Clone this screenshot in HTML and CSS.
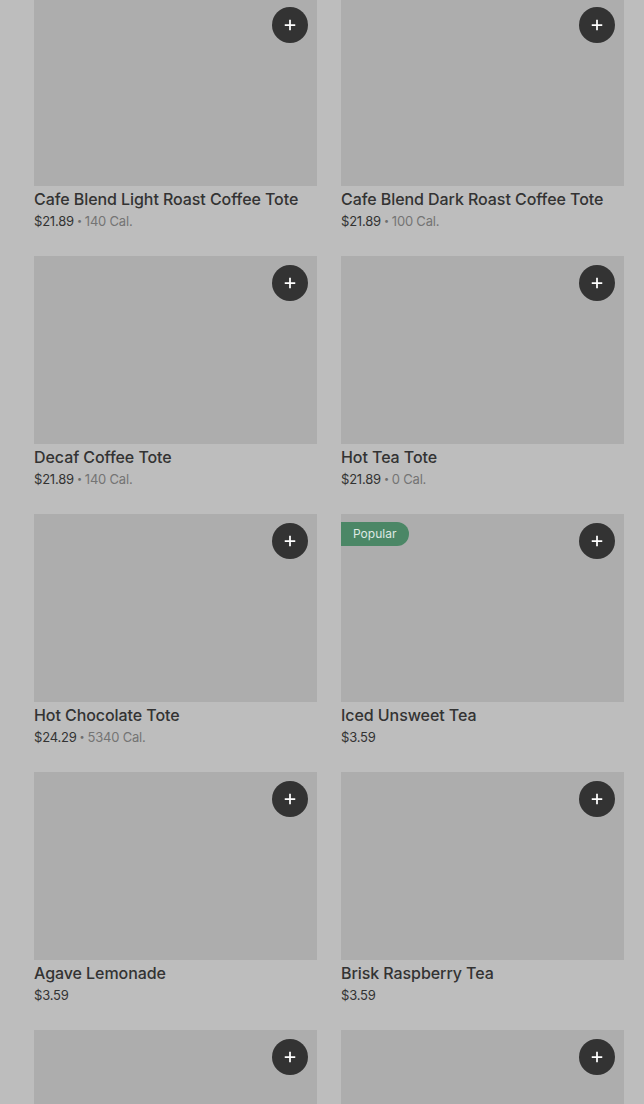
FILE: index.html
```html
<!DOCTYPE html>
<html>
<head>
<meta charset="utf-8">
<link rel="stylesheet" href="styles.css">
</head>
<body>
<div class="grid">
  <div class="item">
    <div class="thumb"><button class="add"><svg viewBox="0 0 16 16" width="16" height="16"><path d="M7 2h2v5h5v2H9v5H7V9H2V7h5z" fill="#fff"/></svg></button></div>
    <div class="name">Cafe Blend Light Roast Coffee Tote</div>
    <div class="meta"><span class="price">$21.89</span><span class="dot">•</span><span class="cal">140 Cal.</span></div>
  </div>
  <div class="item">
    <div class="thumb"><button class="add"><svg viewBox="0 0 16 16" width="16" height="16"><path d="M7 2h2v5h5v2H9v5H7V9H2V7h5z" fill="#fff"/></svg></button></div>
    <div class="name">Cafe Blend Dark Roast Coffee Tote</div>
    <div class="meta"><span class="price">$21.89</span><span class="dot">•</span><span class="cal">100 Cal.</span></div>
  </div>
  <div class="item">
    <div class="thumb"><button class="add"><svg viewBox="0 0 16 16" width="16" height="16"><path d="M7 2h2v5h5v2H9v5H7V9H2V7h5z" fill="#fff"/></svg></button></div>
    <div class="name">Decaf Coffee Tote</div>
    <div class="meta"><span class="price">$21.89</span><span class="dot">•</span><span class="cal">140 Cal.</span></div>
  </div>
  <div class="item">
    <div class="thumb"><button class="add"><svg viewBox="0 0 16 16" width="16" height="16"><path d="M7 2h2v5h5v2H9v5H7V9H2V7h5z" fill="#fff"/></svg></button></div>
    <div class="name">Hot Tea Tote</div>
    <div class="meta"><span class="price">$21.89</span><span class="dot">•</span><span class="cal">0 Cal.</span></div>
  </div>
  <div class="item">
    <div class="thumb"><button class="add"><svg viewBox="0 0 16 16" width="16" height="16"><path d="M7 2h2v5h5v2H9v5H7V9H2V7h5z" fill="#fff"/></svg></button></div>
    <div class="name">Hot Chocolate Tote</div>
    <div class="meta"><span class="price">$24.29</span><span class="dot">•</span><span class="cal">5340 Cal.</span></div>
  </div>
  <div class="item">
    <div class="thumb"><span class="badge">Popular</span><button class="add"><svg viewBox="0 0 16 16" width="16" height="16"><path d="M7 2h2v5h5v2H9v5H7V9H2V7h5z" fill="#fff"/></svg></button></div>
    <div class="name">Iced Unsweet Tea</div>
    <div class="meta"><span class="price">$3.59</span></div>
  </div>
  <div class="item">
    <div class="thumb"><button class="add"><svg viewBox="0 0 16 16" width="16" height="16"><path d="M7 2h2v5h5v2H9v5H7V9H2V7h5z" fill="#fff"/></svg></button></div>
    <div class="name">Agave Lemonade</div>
    <div class="meta"><span class="price">$3.59</span></div>
  </div>
  <div class="item">
    <div class="thumb"><button class="add"><svg viewBox="0 0 16 16" width="16" height="16"><path d="M7 2h2v5h5v2H9v5H7V9H2V7h5z" fill="#fff"/></svg></button></div>
    <div class="name">Brisk Raspberry Tea</div>
    <div class="meta"><span class="price">$3.59</span></div>
  </div>
  <div class="item">
    <div class="thumb"><button class="add"><svg viewBox="0 0 16 16" width="16" height="16"><path d="M7 2h2v5h5v2H9v5H7V9H2V7h5z" fill="#fff"/></svg></button></div>
  </div>
  <div class="item">
    <div class="thumb"><button class="add"><svg viewBox="0 0 16 16" width="16" height="16"><path d="M7 2h2v5h5v2H9v5H7V9H2V7h5z" fill="#fff"/></svg></button></div>
  </div>
</div>
</body>
</html>
```
FILE: styles.css
```css
html, body {
  margin: 0;
  padding: 0;
  background: #bdbdbd;
  height: 1104px;
  overflow: hidden;
}
body {
  font-family: "Inter", "Noto Sans", sans-serif;
  color: #333;
}
.grid {
  display: grid;
  grid-template-columns: 283px 283px;
  column-gap: 24px;
  row-gap: 0;
  padding: 0 20px 0 34px;
  margin-top: -2px;
}
.item {
  height: 258px;
}
.thumb {
  position: relative;
  height: 188px;
  background: #adadad;
}
.add {
  position: absolute;
  top: 9px;
  right: 9px;
  width: 36px;
  height: 36px;
  border-radius: 50%;
  border: none;
  padding: 0;
  background: #333;
  display: flex;
  align-items: center;
  justify-content: center;
}
.add svg {
  width: 14px;
  height: 14px;
}
.badge {
  position: absolute;
  top: 8px;
  left: 0;
  height: 24px;
  line-height: 24px;
  padding: 0 13px 0 12px;
  background: #4b8766;
  color: #dfe9e3;
  font-size: 12px;
  border-radius: 0 12px 12px 0;
}
.name {
  margin-top: 2px;
  font-size: 16px;
  font-weight: 500;
  letter-spacing: -0.07px;
  line-height: 22px;
  color: #333;
  white-space: nowrap;
}
.meta {
  margin-top: 1px;
  font-size: 13px;
  line-height: 20px;
  letter-spacing: -0.2px;
  display: flex;
  align-items: center;
}
.price {
  color: #333;
}
.dot {
  color: #6e6e6e;
  font-size: 9px;
  margin: 0 3px;
}
.cal {
  color: #747474;
}
```
